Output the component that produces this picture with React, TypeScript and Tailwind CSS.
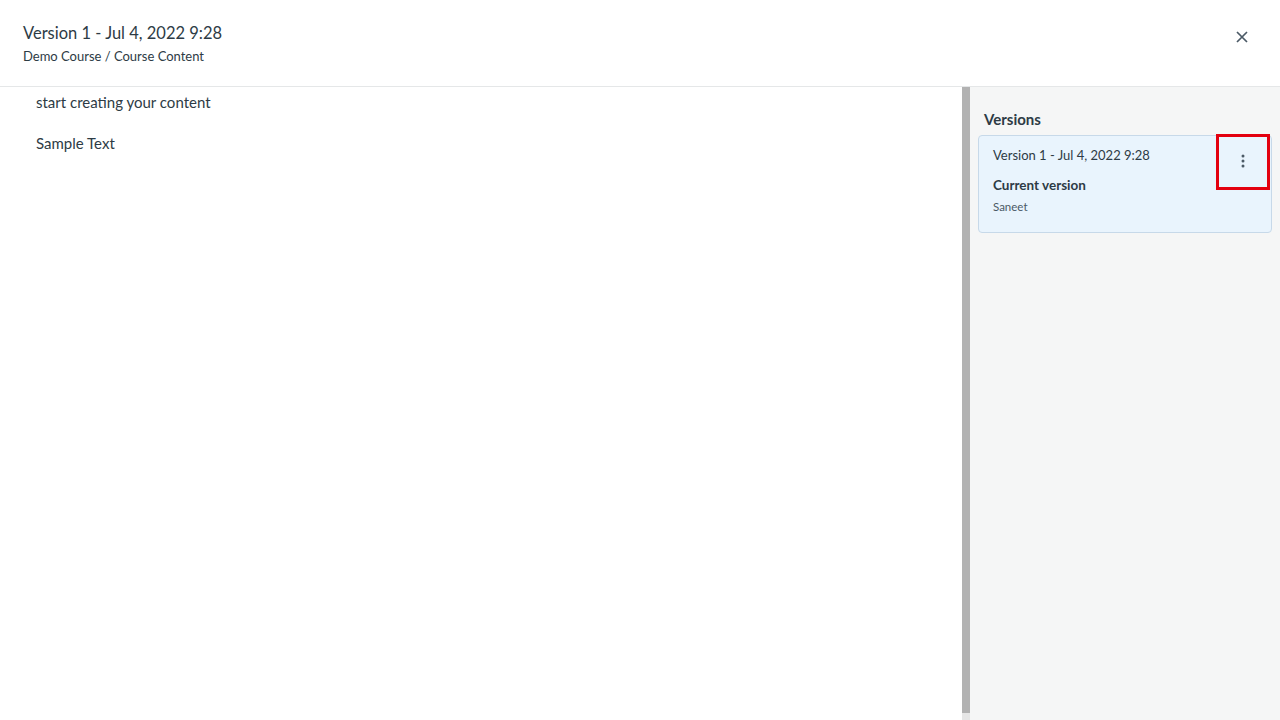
const font = { fontFamily: "Lato, 'Noto Sans', sans-serif" };

const App = () => {
  return (
    <div
      className="w-[1280px] h-[720px] flex flex-col bg-white text-[#2d3b45] overflow-hidden"
      style={font}
    >
      {/* header */}
      <div className="h-[87px] shrink-0 flex items-start justify-between border-b border-[#e5e7e8] pl-[23px] pr-[30px]">
        <div className="pt-[21px]">
          <h1 className="text-[16.5px] leading-[24px] text-[#2d3b45]">
            Version 1 - Jul 4, 2022 9:28
          </h1>
          <p className="text-[13px] leading-[18px] mt-[2px] text-[#2d3b45]">
            Demo Course / Course Content
          </p>
        </div>
        <button className="mt-[29px] w-[16px] h-[16px] flex items-center justify-center text-[#4b5a66]">
          <svg width="12" height="12" viewBox="0 0 12 12">
            <path d="M1 1 L11 11 M11 1 L1 11" stroke="currentColor" strokeWidth="1.7" />
          </svg>
        </button>
      </div>

      <div className="flex-1 flex min-h-0">
        {/* content */}
        <div className="flex-1 pl-[36px] pt-[5px] text-[15px] leading-[20px] text-[#2d3b45]">
          <p>start creating your content</p>
          <p className="mt-[21px]">Sample Text</p>
        </div>

        {/* scrollbar */}
        <div className="w-[8px] flex flex-col">
          <div className="flex-1 bg-[#b2b2b2]" />
          <div className="h-[7px] bg-[#e6e6e6]" />
        </div>

        {/* versions sidebar */}
        <div className="w-[310px] bg-[#f5f6f6] px-[8px] pt-[22px]">
          <h2 className="pl-[6px] text-[15px] leading-[20px] font-bold text-[#2d3b45]">
            Versions
          </h2>
          <div className="relative mt-[6px] h-[98px] rounded-[4px] border border-[#c7d9e9] bg-[#e9f4fd] pl-[14px] pt-[10px]">
            <p className="text-[13px] leading-[18px]">Version 1 - Jul 4, 2022 9:28</p>
            <p className="mt-[12px] text-[13.5px] leading-[18px] font-bold">Current version</p>
            <p className="mt-[6px] text-[11.5px] leading-[14px] text-[#4b5a66]">Saneet</p>
            <div className="absolute left-[237px] top-[-2px] w-[54px] h-[56px] border-[3px] border-[#e3000f] flex items-center justify-center">
              <svg width="4" height="14" viewBox="0 0 4 14" className="mt-[-3px]">
                <circle cx="2" cy="2" r="1.5" fill="#4b5a66" />
                <circle cx="2" cy="7" r="1.5" fill="#4b5a66" />
                <circle cx="2" cy="12" r="1.5" fill="#4b5a66" />
              </svg>
            </div>
          </div>
        </div>
      </div>
    </div>
  );
};

export default App;
